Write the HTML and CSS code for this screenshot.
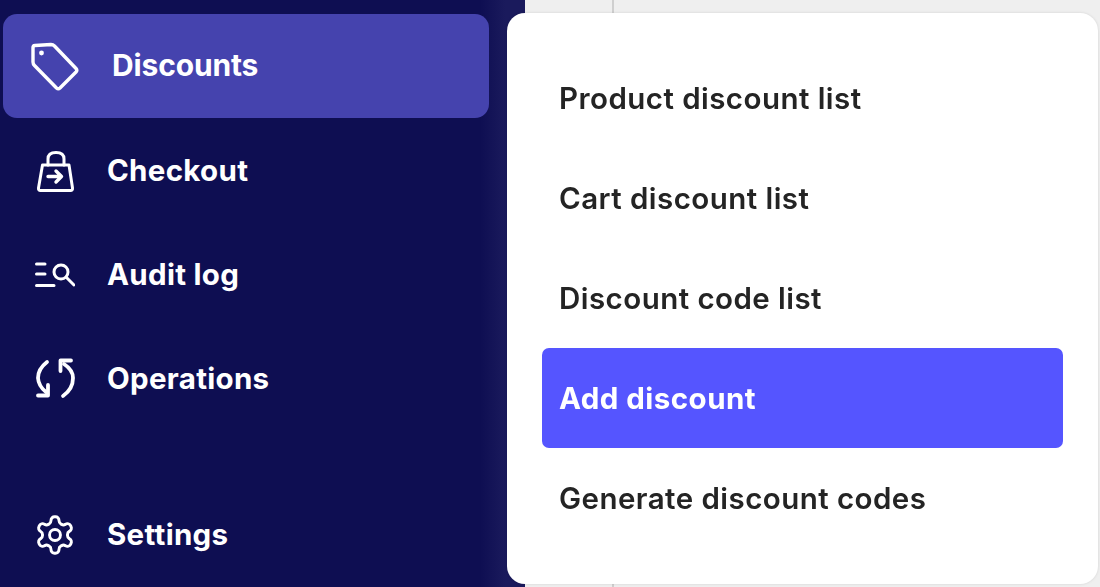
FILE: index.html
```html
<!DOCTYPE html>
<html lang="en">
<head>
<meta charset="utf-8">
<title>Discounts menu</title>
<link rel="stylesheet" href="styles.css">
</head>
<body>
<div class="page">
  <nav class="sidebar">
    <a class="nav-item active">
      <svg class="icon icon-tag" viewBox="0 0 50 50" fill="none" stroke="currentColor" stroke-width="3.4" stroke-linejoin="round" stroke-linecap="round">
        <path d="M5 4.500 L21 3.500 Q23 3.500 24.500 5 L46 27.500 Q47.600 29.300 46 31 L30 47 Q28.300 48.600 26.500 47 L4.500 24.500 Q3 23 3 21 L3 6.500 Q3 4.600 5 4.500 Z"/>
        <circle cx="11.500" cy="12" r="2.400" fill="currentColor" stroke="none"/>
      </svg>
      <span>Discounts</span>
    </a>
    <a class="nav-item">
      <svg class="icon" viewBox="0 0 40 44" fill="none" stroke="currentColor" stroke-width="3" stroke-linejoin="round" stroke-linecap="round">
        <path d="M7.500 16 H34 L37.500 39 Q37.800 41.500 35.500 41.500 H5.500 Q3.200 41.500 3.500 39 Z"/>
        <path d="M13 16 V10 Q13 3.500 21 3.500 Q29 3.500 29 10 V16"/>
        <path d="M13 27.500 H26 M21 22 L26.500 27.500 L21 33" stroke-width="3.400"/>
      </svg>
      <span>Checkout</span>
    </a>
    <a class="nav-item">
      <svg class="icon" viewBox="0 0 40 26" fill="none" stroke="currentColor" stroke-width="3" stroke-linecap="round">
        <path d="M1.500 2 H10 M1.500 12 H10 M1.500 23.500 H19"/>
        <circle cx="26" cy="10" r="7"/>
        <path d="M31.500 15.500 L39 23"/>
      </svg>
      <span>Audit log</span>
    </a>
    <a class="nav-item">
      <svg class="icon" viewBox="0 0 40 42" fill="none" stroke="currentColor" stroke-width="3.800" stroke-linecap="round" stroke-linejoin="round">
        <path d="M12 4 Q3 11 3 20 Q3.500 28 11 34"/>
        <path d="M13 27 V37.500 H3"/>
        <path d="M28 38 Q38 31 38 20 Q38 12 29 6"/>
        <path d="M36 2.500 H25.500 V13"/>
      </svg>
      <span>Operations</span>
    </a>
    <a class="nav-item settings">
      <svg class="icon" viewBox="1 1 22 22" fill="none" stroke="currentColor" stroke-width="1.600" stroke-linejoin="round" stroke-linecap="round">
        <path d="M12.220 2h-.44a2 2 0 0 0-2 2v.18a2 2 0 0 1-1 1.730l-.43.25a2 2 0 0 1-2 0l-.15-.08a2 2 0 0 0-2.730.73l-.22.38a2 2 0 0 0 .73 2.730l.15.1a2 2 0 0 1 1 1.720v.51a2 2 0 0 1-1 1.740l-.15.09a2 2 0 0 0-.73 2.730l.22.38a2 2 0 0 0 2.730.73l.15-.08a2 2 0 0 1 2 0l.43.25a2 2 0 0 1 1 1.730V20a2 2 0 0 0 2 2h.44a2 2 0 0 0 2-2v-.18a2 2 0 0 1 1-1.730l.43-.25a2 2 0 0 1 2 0l.15.08a2 2 0 0 0 2.730-.73l.22-.39a2 2 0 0 0-.73-2.730l-.15-.08a2 2 0 0 1-1-1.740v-.5a2 2 0 0 1 1-1.740l.15-.09a2 2 0 0 0 .73-2.730l-.22-.38a2 2 0 0 0-2.730-.73l-.15.08a2 2 0 0 1-2 0l-.43-.25a2 2 0 0 1-1-1.730V4a2 2 0 0 0-2-2z"/>
        <circle cx="12" cy="12" r="3"/>
      </svg>
      <span>Settings</span>
    </a>
  </nav>
  <main class="content">
    <div class="divider"></div>
  </main>
  <div class="menu">
    <a class="menu-item">Product discount list</a>
    <a class="menu-item">Cart discount list</a>
    <a class="menu-item">Discount code list</a>
    <a class="menu-item selected">Add discount</a>
    <a class="menu-item">Generate discount codes</a>
  </div>
</div>
</body>
</html>
```

FILE: styles.css
```css
* { box-sizing: border-box; }
html, body { margin: 0; height: 100%; overflow: hidden; }
body {
  font-family: Inter, "Liberation Sans", sans-serif;
  background: #0e0e52;
}
.page { display: flex; width: 1100px; height: 587px; position: relative; filter: blur(0.5px); }
.sidebar {
  width: 525px;
  flex: none;
  background: linear-gradient(90deg, #0e0e52 480px, #1a1a5c 505px);
  display: flex;
  flex-direction: column;
  padding: 14px 0 0 3px;
  color: #fff;
}
.nav-item {
  display: flex;
  align-items: center;
  width: 486px;
  height: 104.5px;
  padding-left: 32px;
  gap: 32px;
  font-size: 29.5px;
  font-weight: 650;
  letter-spacing: 0.3px;
}
.nav-item span { margin-bottom: 2px; }
.nav-item .icon { width: 40px; height: 44px; flex: none; }
.nav-item.active {
  background: #4543ae;
  border-radius: 14px;
  padding-left: 27px;
  gap: 32px;
  font-size: 30px;
  letter-spacing: -0.15px;
}
.nav-item.active .icon { width: 50px; height: 50px; }
.settings { margin-top: 51px; }
.content { flex: 1; background: #efefef; position: relative; }
.divider { width: 2px; height: 100%; background: #cfcfcf; margin-left: 87px; }
.menu {
  position: absolute;
  left: 507px;
  top: 13px;
  width: 591px;
  height: 571px;
  background: #fff;
  border-radius: 18px;
  padding: 35px 35px 0;
  display: flex;
  flex-direction: column;
  box-shadow: 0 0 3px rgba(0, 0, 0, 0.12);
}
.menu-item {
  display: flex;
  align-items: center;
  width: 521px;
  height: 100px;
  padding-left: 17px;
  font-size: 29.5px;
  font-weight: 600;
  letter-spacing: 0.45px;
  color: #242424;
  border-radius: 7px;
}
.menu-item.selected { background: #5555ff; color: #fff; font-weight: 700; }
```
